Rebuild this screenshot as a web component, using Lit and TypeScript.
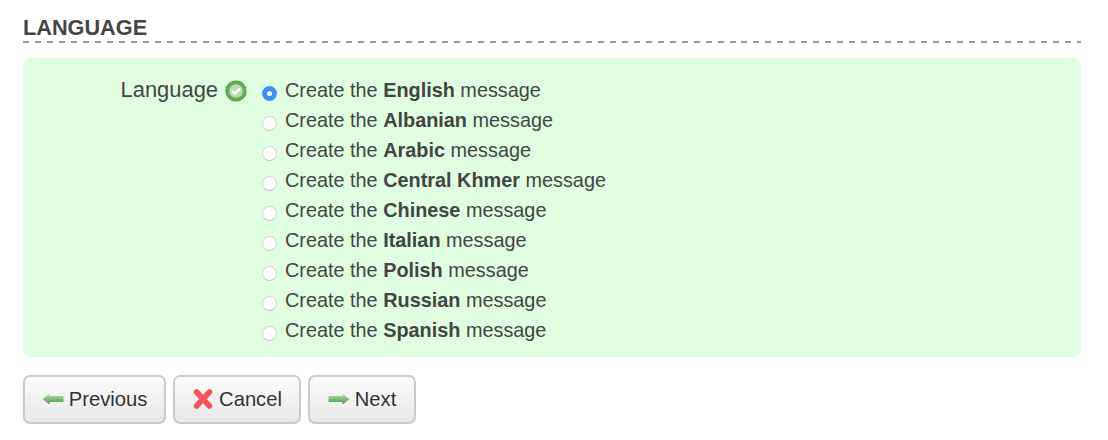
import { LitElement, html, css } from "lit";
import { customElement } from "lit/decorators.js";

const LANGS = ["English", "Albanian", "Arabic", "Central Khmer", "Chinese", "Italian", "Polish", "Russian", "Spanish"];

const arrowLeft = html`<svg class="ico" width="22" height="14" viewBox="0 0 22 14"><defs><linearGradient id="ga" x1="0" y1="0" x2="0" y2="1"><stop offset="0" stop-color="#bfe6b0"/><stop offset="1" stop-color="#3f9145"/></linearGradient></defs><path d="M0.5 7 L7.5 1.5 V4 H21.5 V10 H7.5 V12.5 Z" fill="url(#ga)"/></svg>`;
const arrowRight = html`<svg class="ico" width="22" height="14" viewBox="0 0 22 14"><defs><linearGradient id="gb" x1="0" y1="0" x2="0" y2="1"><stop offset="0" stop-color="#bfe6b0"/><stop offset="1" stop-color="#3f9145"/></linearGradient></defs><path d="M21.5 7 L14.5 1.5 V4 H0.5 V10 H14.5 V12.5 Z" fill="url(#gb)"/></svg>`;
const cross = html`<svg class="ico" width="22" height="22" viewBox="0 0 22 22"><path d="M4.5 4 L17.5 18 M17.5 4 L4.5 18" stroke="#f4545c" stroke-width="5.6" stroke-linecap="round" fill="none"/></svg>`;
const check = html`<svg width="22" height="22" viewBox="0 0 22 22"><circle cx="11" cy="11" r="10" fill="#62ad55" stroke="#4c9345" stroke-width="1.2" stroke-dasharray="2.2 0.4"/><circle cx="11" cy="11" r="6.8" fill="#b9dcae"/><path d="M7.2 11 L10 13.8 L15 8.4" stroke="#fff" stroke-width="2.5" fill="none"/></svg>`;

@customElement("app-root")
export class AppRoot extends LitElement {
  static styles = css`
    :host { display: block; width: 1108px; height: 440px; background: #fff; font-family: "Liberation Sans", Arial, sans-serif; color: #444; overflow: hidden; }
    .wrap { padding: 15px 27px 0 23px; }
    h2 { margin: 0; font-size: 21.7px; line-height: 25px; height: 26px; font-weight: 700; color: #444; text-transform: uppercase; }
    .rule { height: 2px; margin-bottom: 15px; background: repeating-linear-gradient(90deg, #999 0 6px, transparent 6px 11.975px); }
    .panel { background: #e0ffe0; border-radius: 8px; height: 299px; display: flex; box-sizing: border-box; padding-top: 17px; }
    .label { width: 224px; display: flex; justify-content: flex-end; align-items: flex-start; font-size: 21.9px; line-height: 30px; gap: 7px; color: #444; }
    .label svg { margin-top: 5px; }
    .opts { margin-left: 15px; display: flex; flex-direction: column; }
    .opt { display: flex; align-items: flex-start; height: 30px; font-size: 19.85px; line-height: 30px; color: #444; white-space: nowrap; }
    .radio { width: 15px; height: 15px; border-radius: 50%; margin: 11px 8px 0 0; box-sizing: border-box; background: #fff; border: 1px solid #d6d6d6; border-bottom-color: #c4c4c4; flex: none; }
    .radio.on { border: 5px solid #3d8ff5; }
    b { font-weight: 700; }
    .btns { display: flex; gap: 7px; margin-top: 18px; }
    .btn { height: 49px; box-sizing: border-box; padding-bottom: 1px; border: 2px solid #cacaca; border-radius: 7px; background: linear-gradient(#fbfbfb, #e8e8e8); display: flex; align-items: center; justify-content: center; font-size: 20.2px; color: #333; gap: 5px; }
    .b1 { width: 143px; }
    .b2 { width: 128px; gap: 5px; }
    .b3 { width: 108px; gap: 5px; }
    .ico { flex: none; }
  `;
  render() {
    return html`<div class="wrap">
      <h2>Language</h2>
      <div class="rule"></div>
      <div class="panel">
        <div class="label"><span>Language</span>${check}</div>
        <div class="opts">
          ${LANGS.map((l, i) => html`<div class="opt"><span class="radio ${i === 0 ? "on" : ""}"></span><span>Create the <b>${l}</b> message</span></div>`)}
        </div>
      </div>
      <div class="btns">
        <div class="btn b1">${arrowLeft}<span>Previous</span></div>
        <div class="btn b2">${cross}<span>Cancel</span></div>
        <div class="btn b3">${arrowRight}<span>Next</span></div>
      </div>
    </div>`;
  }
}
